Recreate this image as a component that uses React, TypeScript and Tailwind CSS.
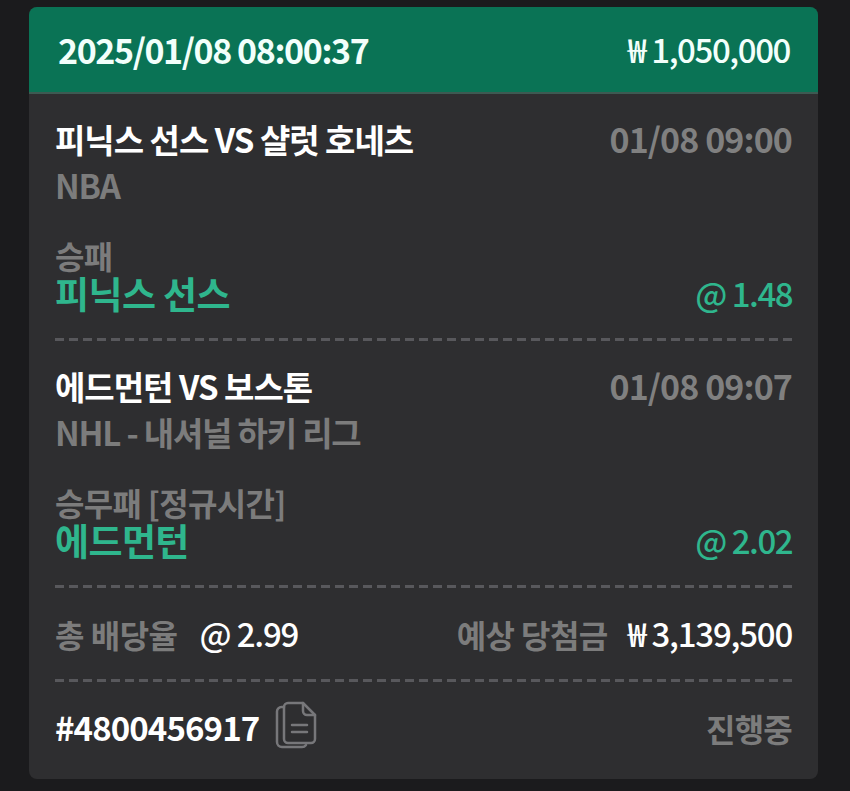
import React from "react";

const font = { fontFamily: '"Noto Sans CJK KR", "Noto Sans", sans-serif' };

function Dash() {
  return <div className="mx-[26px] h-[3px] bg-[repeating-linear-gradient(90deg,#58585c_0_9px,transparent_9px_14px)]" />;
}

function Bet({ title, time, league, market, pick, odds }: { title: string; time: string; league: string; market: string; pick: string; odds: string }) {
  return (
    <div className="flex flex-col px-[26px]">
      <div className="flex h-[46px] items-center justify-between">
        <span className="text-[33px] font-bold leading-none tracking-[-1px] text-white">{title}</span>
        <span className="text-[34px] font-bold leading-none tracking-[-0.9px] text-[#808080]">{time}</span>
      </div>
      <div className="flex h-[46px] items-center text-[33px] font-bold leading-none tracking-[-1.2px] text-[#7c7c7c]">{league}</div>
      <div className="mt-[29px] flex h-[36px] items-center text-[32px] font-bold leading-none tracking-[-0.7px] text-[#7c7c7c]">{market}</div>
      <div className="flex h-[41px] items-center justify-between text-[#2fb68d]">
        <span className="text-[37px] font-bold leading-none tracking-[-0.6px]">{pick}</span>
        <span className="text-[33px] font-medium leading-none tracking-[-1.5px]">{odds}</span>
      </div>
    </div>
  );
}

export default function App() {
  return (
    <div style={font} className="h-[791px] w-[850px] bg-[#1b1b1d] px-[29px] pt-[7px]">
      <div className="flex h-[772px] w-[789px] flex-col overflow-hidden rounded-[8px] bg-[#2e2e30]">
        <div className="flex h-[87px] shrink-0 items-center justify-between border-b-2 border-[#3d5a52] bg-[#0a7355] pl-[29px] pr-[28px] text-[#f2fffb]">
          <span className="text-[34px] font-bold leading-none tracking-[-1.4px]">2025/01/08 08:00:37</span>
          <span className="text-[33px] font-medium leading-none tracking-[-1.4px]">₩ 1,050,000</span>
        </div>
        <div className="pt-[22px]">
          <Bet title="피닉스 선스 VS 샬럿 호네츠" time="01/08 09:00" league="NBA" market="승패" pick="피닉스 선스" odds="@ 1.48" />
        </div>
        <div className="mt-[24px]"><Dash /></div>
        <div className="pt-[22px]">
          <Bet title="에드먼턴 VS 보스톤" time="01/08 09:07" league="NHL - 내셔널 하키 리그" market="승무패 [정규시간]" pick="에드먼턴" odds="@ 2.02" />
        </div>
        <div className="mt-[24px]"><Dash /></div>
        <div className="flex h-[91px] items-center justify-between px-[26px]">
          <div className="flex items-center gap-[22px]">
            <span className="text-[32px] font-bold leading-none tracking-[-0.5px] text-[#7c7c7c]">총 배당율</span>
            <span className="text-[33px] font-medium leading-none tracking-[-1.2px] text-white">@ 2.99</span>
          </div>
          <div className="flex items-center gap-[20px]">
            <span className="text-[32px] font-bold leading-none tracking-[-0.6px] text-[#7c7c7c]">예상 당첨금</span>
            <span className="text-[33px] font-medium leading-none tracking-[-1.2px] text-white">₩ 3,139,500</span>
          </div>
        </div>
        <Dash />
        <div className="flex h-[91px] items-center justify-between px-[26px]">
          <div className="flex items-center gap-[16px]">
            <span className="text-[33px] font-bold leading-none tracking-[-0.9px] text-white">#4800456917</span>
            <svg className="-translate-y-[3px]" width="42" height="48" viewBox="0 0 42 48" fill="none" stroke="#77777a" strokeWidth="2.5" strokeLinejoin="round" strokeLinecap="round">
              <path d="M9 6H6.500A4.500 4.500 0 0 0 2 10.500V41a5 5 0 0 0 5 5h20a5 5 0 0 0 4-2" />
              <path d="M13 2h15l12 12v24a4 4 0 0 1-4 4H13a4 4 0 0 1-4-4V6a4 4 0 0 1 4-4z" />
              <path d="M28 2v8a4 4 0 0 0 4 4h8" />
              <path d="M17 24h15M17 31h15" />
            </svg>
          </div>
          <span className="text-[32px] font-bold leading-none tracking-[-0.8px] text-[#7c7c7c]">진행중</span>
        </div>
      </div>
    </div>
  );
}
